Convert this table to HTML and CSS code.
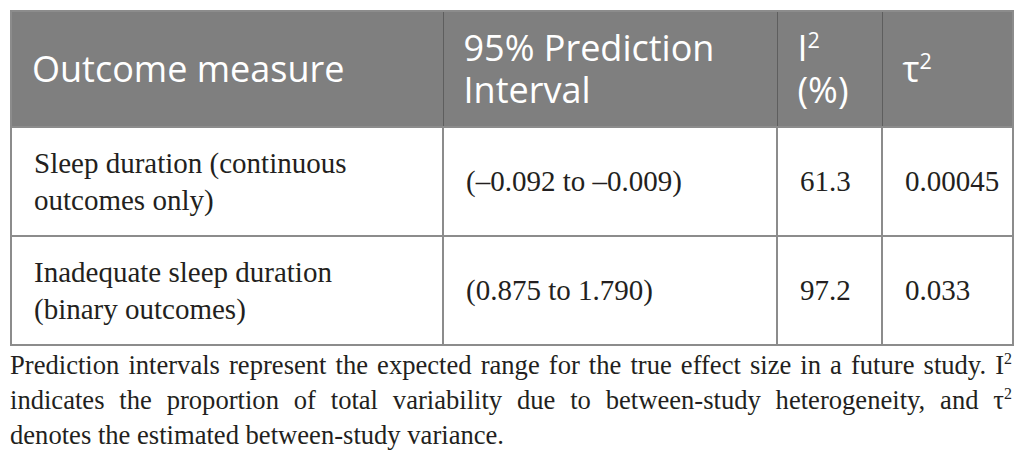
FILE: index.html
```html
<!DOCTYPE html>
<html lang="en">
<head>
    <meta charset="UTF-8">
    <meta name="viewport" content="width=device-width, initial-scale=1.0">
    <title>Prediction intervals</title>
    <link rel="stylesheet" href="styles.css">
</head>
<body>

    <!-- Results table -->
    <table class="results">
        <colgroup>
            <col class="col-measure">
            <col class="col-interval">
            <col class="col-i2">
            <col class="col-tau">
        </colgroup>
        <thead>
            <tr>
                <th>Outcome measure</th>
                <th>95% Prediction Interval</th>
                <th>I<sup>2</sup> (%)</th>
                <th>&tau;<sup>2</sup></th>
            </tr>
        </thead>
        <tbody>
            <tr>
                <td>Sleep duration (continuous outcomes only)</td>
                <td>(&ndash;0.092 to &ndash;0.009)</td>
                <td>61.3</td>
                <td>0.00045</td>
            </tr>
            <tr>
                <td>Inadequate sleep duration (binary outcomes)</td>
                <td>(0.875 to 1.790)</td>
                <td>97.2</td>
                <td>0.033</td>
            </tr>
        </tbody>
    </table>

    <!-- Table footnote -->
    <p class="note">
        <span class="note-lines">Prediction intervals represent the expected range for the true effect size in a future study. I<sup>2</sup> indicates the proportion of total variability due to between-study heterogeneity, and &tau;<sup>2</sup></span>
        <span class="note-end">denotes the estimated between-study variance.</span>
    </p>

</body>
</html>
```

FILE: styles.css
```css
/* Page */
body {
    margin: 0;
    padding: 10px 14px 0 10px;
    background-color: #ffffff;
    color: #231f20;
}

/* Table */
.results {
    width: 1002px;
    border-collapse: collapse;
    border: 2px solid #8c8c8c;
    table-layout: fixed;
}

.col-measure { width: 432px; }
.col-interval { width: 334px; }
.col-i2 { width: 105px; }
.col-tau { width: 131px; }

.results th {
    background-color: #7f7f7f;
    color: #ffffff;
    font-family: "Open Sans", sans-serif;
    font-weight: normal;
    font-size: 36px;
    line-height: 42px;
    text-align: left;
    padding: 0 18px 0 20px;
    height: 114px;
    border-left: 1px solid #5e5e5e;
    vertical-align: middle;
}

.results th:first-child {
    border-left: none;
}

.results th sup {
    font-size: 0.6em;
    line-height: 0;
}

.results td {
    font-family: "Liberation Serif", serif;
    font-size: 29px;
    line-height: 37px;
    padding: 0 30px 0 22px;
    height: 107px;
    border-top: 2px solid #8c8c8c;
    border-left: 2px solid #8c8c8c;
    vertical-align: middle;
}

.results td:first-child {
    border-left: none;
}

/* Footnote below the table */
.note {
    font-family: "Liberation Serif", serif;
    font-size: 26.6px;
    line-height: 35px;
    margin: 0;
    padding-top: 2px;
    width: 1002px;
}

.note-lines {
    display: block;
    text-align: justify;
    text-align-last: justify;
}

.note-end {
    display: block;
}

.note sup {
    font-size: 0.6em;
    line-height: 0;
}
```
